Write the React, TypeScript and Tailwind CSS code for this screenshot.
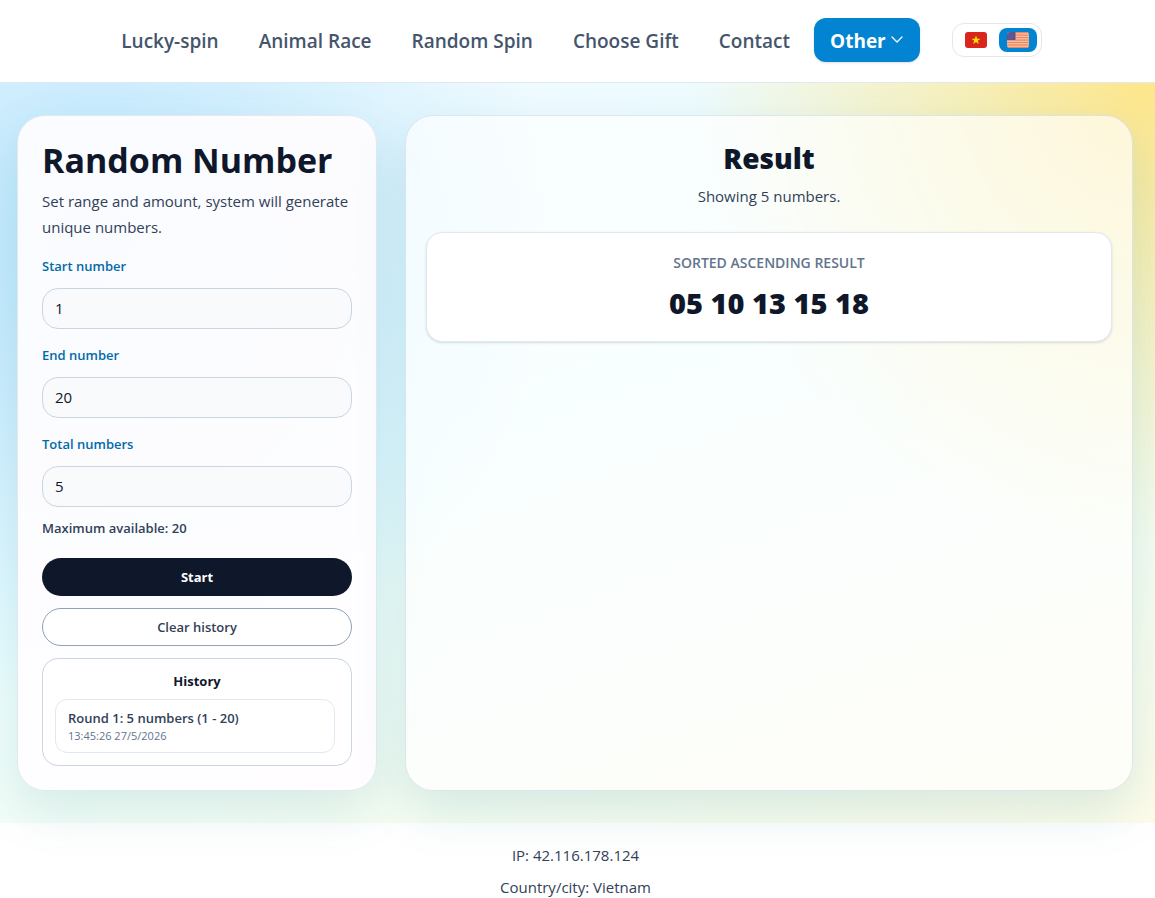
import { useState } from "react";

const links = ["Lucky-spin", "Animal Race", "Random Spin", "Choose Gift", "Contact"];

function VietnamFlag() {
  return (
    <svg viewBox="0 0 22 16" className="h-4 w-[22px]" aria-hidden="true">
      <rect width="22" height="16" rx="3" fill="#da251d" />
      <path d="M11 3.6l1.1 3.2h3.4l-2.7 2 1 3.3-2.8-2-2.8 2 1-3.3-2.7-2h3.4z" fill="#ffe600" />
    </svg>
  );
}

function UsFlag() {
  return (
    <svg viewBox="0 0 22 16" className="h-4 w-[22px]" aria-hidden="true">
      <clipPath id="us">
        <rect width="22" height="16" rx="3" />
      </clipPath>
      <g clipPath="url(#us)">
        <rect width="22" height="16" fill="#f6cdb0" />
        {[0, 1, 2, 3, 4, 5, 6].map((i) => (
          <rect key={i} y={i * 2.46} width="22" height="1.35" fill="#ee8560" />
        ))}
        <rect width="8.5" height="8" fill="#5a5590" />
        {[1.5, 3.5, 5.5].map((y) =>
          [1.5, 3.5, 5.5].map((x) => (
            <circle key={`${x}-${y}`} cx={x + 0.4} cy={y + 0.4} r="0.3" fill="#8f8fc0" />
          ))
        )}
      </g>
    </svg>
  );
}

function Field({ id, label, value, onChange }: { id: string; label: string; value: string; onChange: (v: string) => void }) {
  return (
    <div className="mb-4">
      <label htmlFor={id} className="block text-[13px] leading-5 font-semibold text-sky-700">
        {label}
      </label>
      <input
        id={id}
        value={value}
        onChange={(e) => onChange(e.target.value)}
        className="mt-3 block h-[41px] w-full rounded-2xl border border-slate-300 bg-slate-50 px-3 pb-0.5 text-[15px] text-slate-900"
      />
    </div>
  );
}

export default function App() {
  const [start, setStart] = useState("1");
  const [end, setEnd] = useState("20");
  const [total, setTotal] = useState("5");

  return (
    <div className="bg-white font-['Open_Sans',sans-serif] text-slate-700">
      <header className="flex h-[83px] items-center justify-center border-b border-slate-200 bg-white pr-3 pb-[2px]">
        <nav className="flex items-center">
          {links.map((l) => (
            <a key={l} href="#" className="px-5 pt-0.5 text-[19px] font-semibold whitespace-nowrap text-slate-600">
              {l}
            </a>
          ))}
          <button className="ml-1 flex h-11 items-center gap-1 rounded-xl bg-[#0284d2] px-4 text-[19px] font-bold text-white shadow-sm">
            <span className="pt-0.5">Other</span>
            <svg viewBox="0 0 14 14" className="size-3.5" fill="none" stroke="currentColor" strokeWidth="1.3" strokeLinecap="round" strokeLinejoin="round" aria-hidden="true">
              <path d="M2 4l5 5 5-5" />
            </svg>
          </button>
        </nav>
        <div className="ml-8 flex h-[34px] items-center gap-1 rounded-xl border border-slate-200 px-1">
          <button aria-label="Tiếng Việt" className="flex h-6 w-[38px] items-center justify-center rounded-lg">
            <VietnamFlag />
          </button>
          <button aria-label="English" className="flex h-6 w-[38px] items-center justify-center rounded-lg bg-[#0284d2]">
            <UsFlag />
          </button>
        </div>
      </header>

      <main className="grid grid-cols-[360px_1fr] gap-7 bg-[radial-gradient(circle_at_8%_22%,#bae6fd_0%,transparent_38%),radial-gradient(circle_at_top_right,#fde68a_0%,transparent_34%),linear-gradient(160deg,#f0f9ff_0%,#ecfeff_45%,#fefce8_100%)] pt-8 pr-[22px] pb-8 pl-[17px]">
        <section className="rounded-[28px] border border-slate-200 bg-[#fffdff]/92 p-6 shadow-[0_20px_50px_rgba(15,118,140,0.13)]">
          <h1 className="text-[34px] leading-10 font-bold whitespace-nowrap text-slate-900">Random Number</h1>
          <p className="mt-2 text-[15px] leading-[26px]">Set range and amount, system will generate unique numbers.</p>
          <div className="mt-4">
            <Field id="start" label="Start number" value={start} onChange={setStart} />
            <Field id="end" label="End number" value={end} onChange={setEnd} />
            <Field id="total" label="Total numbers" value={total} onChange={setTotal} />
          </div>
          <p className="-mt-[5px] text-[13px] leading-5 font-semibold">Maximum available: 20</p>
          <button className="mt-5 h-[38px] w-full rounded-full bg-slate-900 pt-px text-[13px] font-bold text-white">Start</button>
          <button className="mt-3 h-[38px] w-full rounded-full border border-slate-400 bg-white pt-px text-[13px] font-semibold">Clear history</button>
          <div className="mt-3 rounded-2xl border border-slate-300 bg-white p-3">
            <h2 className="text-center text-[13px] leading-5 font-bold text-slate-900">History</h2>
            <ul className="mt-2 pr-1">
              <li className="rounded-xl border border-slate-200 px-3 py-2">
                <p className="text-[13px] leading-5 font-semibold">Round 1: 5 numbers (1 - 20)</p>
                <p className="text-[11px] leading-4 text-slate-500">13:45:26 27/5/2026</p>
              </li>
            </ul>
          </div>
        </section>

        <section className="rounded-[28px] border border-slate-300/60 bg-white/65 p-5 text-center shadow-[0_20px_50px_rgba(15,118,140,0.15)]">
          <h2 className="mt-1 text-[28px] leading-9 font-extrabold text-slate-900">Result</h2>
          <p className="mt-2 text-[15px] leading-6">Showing 5 numbers.</p>
          <div className="mt-6 rounded-2xl border border-slate-200 bg-white p-5 shadow-sm">
            <p className="text-[14px] leading-5 font-semibold text-slate-500">SORTED ASCENDING RESULT</p>
            <p className="mt-3 text-[29px] leading-9 font-extrabold text-slate-900">05 10 13 15 18</p>
          </div>
        </section>
      </main>

      <footer className="pt-5 pr-1 text-center text-[15px] leading-6">
        <p>IP: 42.116.178.124</p>
        <p className="mt-2">Country/city: Vietnam</p>
      </footer>
    </div>
  );
}
